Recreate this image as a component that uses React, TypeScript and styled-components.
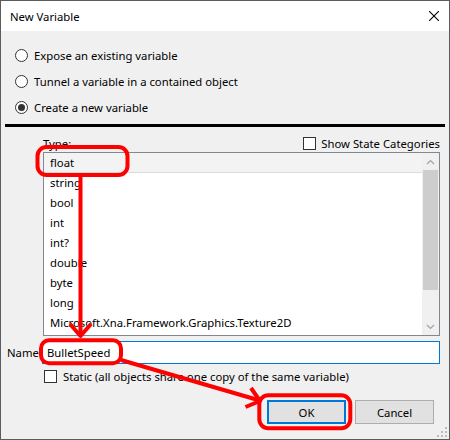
import React from "react";
import styled, { createGlobalStyle } from "styled-components";

const Global = createGlobalStyle`
  html, body { margin: 0; padding: 0; background: #fff; }
  * { box-sizing: border-box; }
`;

const Stage = styled.div`
  position: relative;
  width: 450px;
  height: 440px;
  font-family: "Noto Sans", "Segoe UI", sans-serif;
  font-size: 11.3px;
  color: #000;
`;

const Window = styled.div`
  width: 450px;
  height: 440px;
  border: 1px solid #5c5c5c;
  background: #f0f0f0;
  display: flex;
  flex-direction: column;
`;

const TitleBar = styled.div`
  height: 30px;
  flex: none;
  background: #fff;
  display: flex;
  align-items: center;
  justify-content: space-between;
  padding: 0 10px 0 9px;
`;

const Body = styled.div`
  flex: 1;
  display: flex;
  flex-direction: column;
  padding-top: 11px;
`;

const RadioRow = styled.label`
  height: 26px;
  display: flex;
  align-items: center;
  gap: 6px;
  padding-left: 14px;
`;

const RadioCircle = styled.span<{ $checked?: boolean }>`
  width: 13px;
  height: 13px;
  border-radius: 50%;
  border: 1px solid #333;
  background: #fff;
  display: flex;
  align-items: center;
  justify-content: center;
  &::after {
    content: "";
    width: 7px;
    height: 7px;
    border-radius: 50%;
    background: ${(p) => (p.$checked ? "#333" : "transparent")};
  }
`;

const Separator = styled.div`
  height: 3px;
  margin: 4px 4px 0;
  background: #000;
`;

const TypeHeader = styled.div`
  height: 25px;
  padding: 10px 9px 0 42px;
  display: flex;
  align-items: flex-start;
  justify-content: space-between;
  line-height: 13px;
`;

const CheckLabel = styled.label`
  display: flex;
  align-items: center;
  gap: 5px;
  line-height: 13px;
`;

const CheckBox = styled.span`
  width: 13px;
  height: 13px;
  border: 1px solid #333;
  background: #fff;
  flex: none;
`;

const ListBox = styled.div`
  margin-left: 42px;
  width: 397px;
  height: 184px;
  border: 1px solid #828790;
  background: #fff;
  display: flex;
`;

const Items = styled.div`
  flex: 1;
  display: flex;
  flex-direction: column;
`;

const Item = styled.div<{ $selected?: boolean }>`
  height: 20px;
  line-height: 20px;
  padding-left: 6px;
  white-space: nowrap;
  background: ${(p) => (p.$selected ? "#f3f3f3" : "transparent")};
  border-bottom: 1px solid ${(p) => (p.$selected ? "#dcdcdc" : "transparent")};
`;

const ScrollBar = styled.div`
  width: 17px;
  background: #f0f0f0;
  display: flex;
  flex-direction: column;
`;

const ScrollArrow = styled.div`
  height: 17px;
  display: flex;
  align-items: center;
  justify-content: center;
`;

const Thumb = styled.div`
  height: 120px;
  margin: 0 1px;
  background: #cdcdcd;
`;

const Track = styled.div`
  flex: 1;
`;

const NameRow = styled.div`
  margin-top: 5px;
  padding-left: 6px;
  display: flex;
  align-items: center;
`;

const NameLabel = styled.span`
  width: 35px;
`;

const TextBox = styled.div`
  width: 398px;
  height: 23px;
  border: 1px solid #0078d7;
  background: #fff;
  padding-left: 4px;
  line-height: 21px;
`;

const StaticRow = styled.label`
  margin-top: 6px;
  padding-left: 43px;
  display: flex;
  align-items: center;
  gap: 6px;
  line-height: 13px;
`;

const ButtonRow = styled.div`
  margin-top: 17px;
  padding-right: 15px;
  display: flex;
  justify-content: flex-end;
  gap: 9px;
`;

const Button = styled.button<{ $default?: boolean }>`
  width: 79px;
  height: 24px;
  font: inherit;
  color: #000;
  background: #e1e1e1;
  border: ${(p) => (p.$default ? "2px solid #0078d7" : "1px solid #adadad")};
  padding: 0;
`;

const Overlay = styled.svg`
  position: absolute;
  left: 0;
  top: 0;
  pointer-events: none;
`;

const Grip = styled.svg`
  position: absolute;
  right: 2px;
  bottom: 2px;
`;

const Chevron = ({ up }: { up?: boolean }) => (
  <svg width="9" height="6" viewBox="0 0 9 6">
    <path
      d={up ? "M1 5 L4.5 1.5 L8 5" : "M1 1 L4.5 4.5 L8 1"}
      fill="none"
      stroke="#a3a3a3"
      strokeWidth="1.2"
    />
  </svg>
);

const types = [
  "float",
  "string",
  "bool",
  "int",
  "int?",
  "double",
  "byte",
  "long",
  "Microsoft.Xna.Framework.Graphics.Texture2D",
];

export default function App() {
  return (
    <Stage>
      <Global />
      <Window>
        <TitleBar>
          <span>New Variable</span>
          <svg width="10" height="10" viewBox="0 0 10 10">
            <path d="M0 0 L10 10 M10 0 L0 10" stroke="#000" strokeWidth="1.1" />
          </svg>
        </TitleBar>
        <Body>
          <RadioRow>
            <RadioCircle />
            Expose an existing variable
          </RadioRow>
          <RadioRow>
            <RadioCircle />
            Tunnel a variable in a contained object
          </RadioRow>
          <RadioRow>
            <RadioCircle $checked />
            Create a new variable
          </RadioRow>
          <Separator />
          <TypeHeader>
            <span>Type:</span>
            <CheckLabel>
              <CheckBox />
              Show State Categories
            </CheckLabel>
          </TypeHeader>
          <ListBox>
            <Items>
              {types.map((t, i) => (
                <Item key={t} $selected={i === 0}>
                  {t}
                </Item>
              ))}
            </Items>
            <ScrollBar>
              <ScrollArrow>
                <Chevron up />
              </ScrollArrow>
              <Thumb />
              <Track />
              <ScrollArrow>
                <Chevron />
              </ScrollArrow>
            </ScrollBar>
          </ListBox>
          <NameRow>
            <NameLabel>Name</NameLabel>
            <TextBox>BulletSpeed</TextBox>
          </NameRow>
          <StaticRow>
            <CheckBox />
            Static (all objects share one copy of the same variable)
          </StaticRow>
          <ButtonRow>
            <Button $default>OK</Button>
            <Button>Cancel</Button>
          </ButtonRow>
        </Body>
      </Window>
      <Grip width="11" height="11" viewBox="0 0 11 11">
        {[
          [8, 0],
          [8, 4],
          [4, 4],
          [8, 8],
          [4, 8],
          [0, 8],
        ].map(([x, y]) => (
          <rect key={`${x}-${y}`} x={x} y={y} width="2" height="2" fill="#bcbcbc" />
        ))}
      </Grip>
      <Overlay width="450" height="440" viewBox="0 0 450 440">
        <g fill="none" stroke="#f00" strokeWidth="4" strokeLinejoin="round">
          <rect x="37.5" y="147" width="90" height="28" rx="9" />
          <line x1="80.5" y1="176" x2="80.5" y2="335" />
          <path d="M70 324 L80.5 336 L91 324" />
          <rect x="41" y="340.3" width="80" height="23" rx="8" />
          <line x1="121" y1="360" x2="258" y2="400" />
          <path d="M251 388 L260 401 L245.5 407" />
          <rect x="259.3" y="395.3" width="91" height="33" rx="9" />
        </g>
      </Overlay>
    </Stage>
  );
}
